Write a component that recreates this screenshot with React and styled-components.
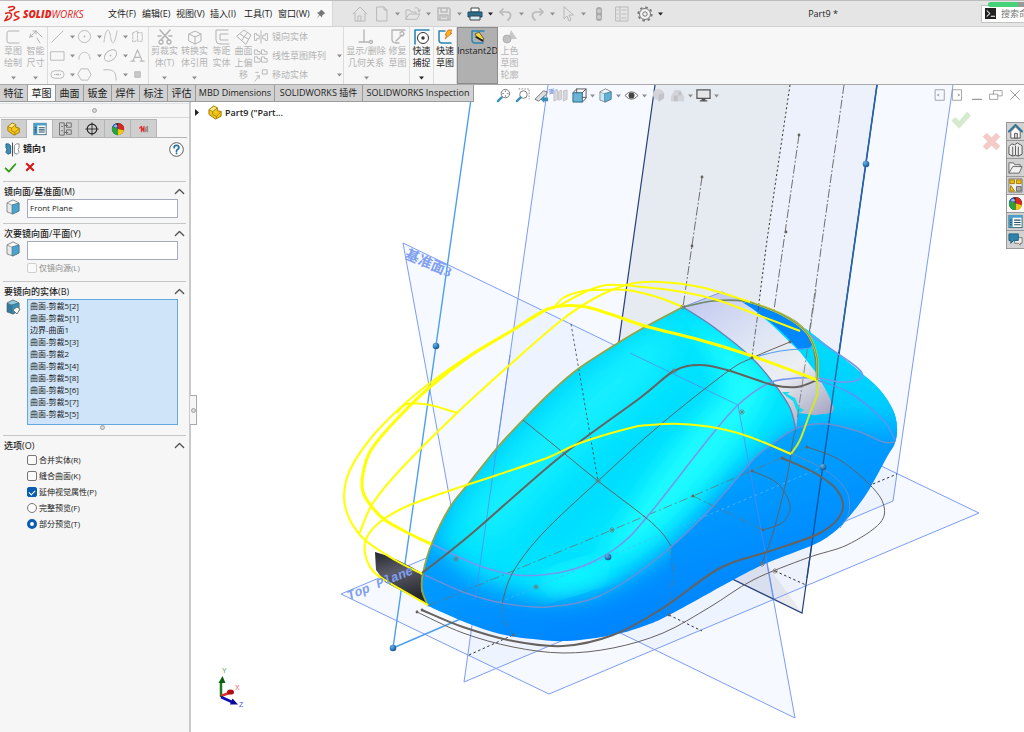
import React, { useState } from "react";
import styled, { createGlobalStyle, css } from "styled-components";

const GlobalStyle = createGlobalStyle`
  * {
    box-sizing: border-box;
  }
  body {
    margin: 0;
    background: #fff;
    color: #222;
    font-family: "Open Sans", "Noto Sans CJK SC", sans-serif;
    font-size: 9px;
    line-height: 12px;
  }
  button, input {
    font: inherit;
    color: inherit;
    margin: 0;
  }
  button {
    border: 0;
    padding: 0;
    background: none;
    cursor: pointer;
  }
`;

const Window = styled.div`
  display: flex;
  flex-direction: column;
  min-height: 100vh;
  overflow: hidden;
`;

/* ---------- title bar ---------- */

const TitleBar = styled.header`
  display: flex;
  align-items: stretch;
  height: 27px;
  background: #e5e5e5;
  border-top: 1px solid #bdbdbd;
  border-bottom: 1px solid #d2d2d2;
`;

const MenuSide = styled.div`
  display: flex;
  align-items: center;
  width: 333px;
  flex: none;
  padding-left: 4px;
  background: #f8f8f8;
  border-right: 1px solid #d8d8d8;
`;

const Logo = styled.div`
  display: flex;
  align-items: center;
  gap: 2px;
  width: 104px;
  color: #e2231a;
  font-size: 10px;
  font-style: italic;
  b {
    font-weight: 800;
  }
  svg {
    width: 17px;
    height: 17px;
    flex: none;
  }
`;

const Menu = styled.nav`
  display: flex;
  align-items: center;
  button {
    width: 34px;
    white-space: nowrap;
    text-align: left;
  }
  button:last-child {
    width: 38px;
  }
`;

const QuickTools = styled.div`
  display: flex;
  align-items: center;
  padding-left: 19px;
`;

const ToolButton = styled.button`
  display: flex;
  align-items: center;
  justify-content: ${(p) => (p.$center ? "center" : "flex-start")};
  gap: ${(p) => p.$gap || 5}px;
  width: ${(p) => p.$wide}px;
  flex: none;
  color: ${(p) => (p.$on ? "#333" : "#b9b9b9")};
`;

const DocTitle = styled.div`
  flex: 1;
  align-self: center;
  text-align: center;
  padding-right: 3px;
`;

const SearchWrap = styled.div`
  position: relative;
  display: flex;
`;

const SearchBox = styled.div`
  display: flex;
  align-items: center;
  align-self: center;
  gap: 5px;
  width: 43px;
  height: 18px;
  padding-left: 3px;
  overflow: hidden;
  background: #fff;
  border: 1px solid #c4c4c4;
  border-right: 0;
  input {
    width: 60px;
    border: 0;
    padding: 0;
    outline: none;
    background: none;
    font-size: 9px;
  }
  input::placeholder {
    color: #777;
    opacity: 1;
  }
`;

const Progress = styled.div`
  position: absolute;
  z-index: 1;
  top: 1px;
  right: 0;
  width: 36px;
  height: 5px;
  border-radius: 3px 0 0 3px;
  background: linear-gradient(90deg, #45d279 0 30px, #999 30px);
`;

/* ---------- ribbon ---------- */

const Ribbon = styled.div`
  display: flex;
  height: 58px;
  background: #f7f7f7;
  border-bottom: 1px solid #a8a8a8;
`;

const Group = styled.div`
  display: flex;
  padding: 0 1px;
  border-right: 1px solid ${(p) => (p.$last ? "transparent" : "#dcdcdc")};
`;

const BigTool = styled.button`
  display: flex;
  flex-direction: column;
  align-items: center;
  width: ${(p) => p.$wide}px;
  padding: 2px 0 4px;
  line-height: 12px;
  white-space: pre-line;
  color: ${(p) => (p.$on ? "#222" : "#b3b3b3")};
  ${(p) =>
    p.$pressed &&
    css`
      background: #b0b0b0;
      outline: 1px solid #8c8c8c;
      outline-offset: -1px;
    `}
  > svg:last-child {
    margin-top: auto;
  }
`;

const SketchGrid = styled.div`
  display: grid;
  grid-template-columns: 27px 26px 27px 17px;
  grid-auto-rows: 19px;
  padding: 0 0 0 1px;
  height: 57px;
`;

const SmallList = styled.div`
  display: grid;
  grid-auto-rows: 19px;
  width: 88px;
`;

const SmallTool = styled.button`
  display: flex;
  align-items: center;
  gap: 4px;
  color: #b3b3b3;
  white-space: nowrap;
  > svg:last-child {
    margin-left: auto;
  }
`;

/* ---------- workspace ---------- */

const Workspace = styled.main`
  position: relative;
  display: flex;
  flex-direction: column;
  flex: 1;
  min-height: 560px;
`;

const SceneSvg = styled.svg`
  position: absolute;
  inset: 0;
  width: 100%;
  height: 100%;
  pointer-events: none;
`;

const TopStrip = styled.div`
  position: relative;
  display: flex;
  align-items: flex-start;
  height: 17px;
`;

const TabBar = styled.div`
  display: flex;
  height: 17px;
  border-bottom: 1px solid #9b9b9b;
`;

const Tab = styled.button`
  width: ${(p) => p.$wide || 28}px;
  font-size: ${(p) => (p.$wide ? 9 : 10)}px;
  white-space: nowrap;
  background: ${(p) => (p.$active ? "#f9f9f9" : "#d1d1d1")};
  border-right: 1px solid #9b9b9b;
`;

const HeadsUp = styled.div`
  display: flex;
  align-items: center;
  padding: 3px 0 0 ${(p) => p.$left || 0}px;
  margin-left: ${(p) => (p.$end ? "auto" : 0)};
`;

const Columns = styled.div`
  position: relative;
  display: flex;
  flex: 1;
`;

/* ---------- property manager ---------- */

const Panel = styled.aside`
  position: relative;
  flex: none;
  width: 191px;
  background: #f6f6f6;
  border-right: 2px solid #c9c9c9;
`;

const Grip = styled.div`
  width: 5px;
  height: 5px;
  margin: ${(p) => p.$m || "auto"};
  border: 1px solid #a3a3a3;
  border-radius: 50%;
  background: #d8d8d8;
`;

const PanelTop = styled.div`
  display: flex;
  height: 15px;
  margin-top: 1px;
  border-top: 1px solid #dde3e6;
  border-bottom: 1px solid #d6d6d6;
`;

const PanelTabs = styled.div`
  display: flex;
  height: 19px;
  margin: 1px 2px 0 1px;
  border-bottom: 1px solid #b5b5b5;
`;

const PanelTab = styled.button`
  display: flex;
  align-items: center;
  justify-content: center;
  width: 26px;
  height: ${(p) => (p.$active ? 19 : 18)}px;
  background: ${(p) => (p.$active ? "#f6f6f6" : "#cfcfcf")};
  border-top: 1px solid #b5b5b5;
  border-right: 1px solid #b5b5b5;
`;

const FeatureHead = styled.div`
  display: flex;
  align-items: center;
  gap: 3px;
  height: 22px;
  padding: 0 5px;
  h1 {
    flex: 1;
    margin: 0;
    font-size: 9px;
    font-weight: 700;
  }
`;

const Actions = styled.div`
  display: flex;
  align-items: center;
  gap: 7px;
  height: 17px;
  padding-left: 4px;
`;

const Section = styled.section`
  margin: 4px 3px 0;
  border-top: 1px solid #c6c6c6;
  padding: 3px 0 1px;
`;

const SectionTitle = styled.button`
  display: flex;
  align-items: center;
  justify-content: space-between;
  width: 100%;
  height: 13px;
  padding: 0 1px;
  font-weight: 500;
`;

const PickRow = styled.div`
  display: flex;
  align-items: flex-start;
  gap: 6px;
  margin-top: 1px;
  padding: 0 8px 0 2px;
`;

const PickInput = styled.input`
  flex: 1;
  min-width: 0;
  height: 19px;
  padding: 0 2px 3px;
  border: 1px solid #a5abbd;
  background: #fff;
  font-size: 8px;
  outline: none;
`;

const BodyList = styled.ul`
  flex: 1;
  height: 126px;
  margin: 0;
  padding: 0 2px;
  list-style: none;
  overflow: hidden;
  border: 1px solid #62a9e0;
  background: #cfe4f8;
  font-size: 8px;
  line-height: 12px;
`;

const Choice = styled.label`
  display: flex;
  align-items: center;
  gap: 2px;
  height: 16px;
  padding-left: 24px;
  font-size: 8px;
  color: ${(p) => (p.$off ? "#8b8b8b" : "#222")};
  input {
    appearance: none;
    display: flex;
    align-items: center;
    justify-content: center;
    width: 10px;
    height: 10px;
    border: 1px solid ${(p) => (p.$off ? "#cfcfcf" : "#777")};
    border-radius: 2px;
    background: #fafafa;
  }
  input[type="radio"] {
    border-radius: 50%;
  }
  input[type="checkbox"]:checked {
    border-color: #0a5cb0;
    background: #0a5cb0;
  }
  input[type="checkbox"]:checked::after {
    content: "";
    width: 5px;
    height: 3px;
    border: solid #fff;
    border-width: 0 0 1px 1px;
    transform: rotate(-45deg);
  }
  input[type="radio"]:checked {
    border: 3px solid #0a5cb0;
    background: #fff;
  }
`;

const PanelHandle = styled.button`
  position: absolute;
  top: 293px;
  right: -8px;
  display: flex;
  width: 7px;
  height: 30px;
  background: #f6f6f6;
  border: 1px solid #a9a9a9;
  border-left: 0;
`;

/* ---------- graphics area ---------- */

const TreeRoot = styled.button`
  display: flex;
  align-items: center;
  align-self: flex-start;
  gap: 2px;
  padding: 3px 0 0 4px;
  font-size: 9px;
  font-weight: 600;
  > svg:first-child {
    margin-right: 6px;
  }
`;

const Corner = styled.div`
  display: flex;
  align-items: flex-start;
  gap: 11px;
  margin-left: auto;
  padding: 7px 5px 0 0;
  button + button {
    margin-top: 23px;
  }
`;

const TaskPane = styled.div`
  display: flex;
  flex-direction: column;
  align-self: flex-start;
  width: 18px;
  margin-top: 20px;
  border-left: 1px solid #999;
  border-top: 1px solid #999;
`;

const TaskButton = styled.button`
  display: flex;
  align-items: center;
  justify-content: center;
  height: 18px;
  background: ${(p) => (p.$active ? "#f8f8f8" : "#d2d2d2")};
  border-bottom: 1px solid #999;
`;

/* ---------- icons ---------- */

const P = ({ d, ...rest }) => (
  <path d={d} fill="none" stroke="currentColor" strokeLinecap="round" strokeLinejoin="round" {...rest} />
);

const cubeFaces = (front, side, top) => (
  <>
    <path d="M2 4 8 1l6 3v8l-6 3-6-2z" fill={side} stroke="#555" strokeWidth=".6" />
    <path d="M2 4l5 2 7-2-6-3z" fill={top} stroke="#666" strokeWidth=".5" />
    <path d="M7 6l7-2v8l-7 3z" fill={front} stroke="#35708d" strokeWidth=".6" />
  </>
);

const ballArt = (
  <>
    <circle cx="8" cy="8" r="7" fill="#222" />
    <path d="M8 8 6 1.300A7 7 0 0 0 2 11.500z" fill="#2d61c9" />
    <path d="M8 8 2 5A7 7 0 0 0 4 13.700z" fill="#2da23a" />
    <path d="M8 8 8 1A7 7 0 0 1 14.800 9.500z" fill="#d8281f" />
    <path d="M8 8l6.800 1.500A7 7 0 0 1 8 15z" fill="#f3c613" />
    <path d="M8 8v7A7 7 0 0 1 3 13z" fill="#2da23a" />
    <ellipse cx="5.500" cy="4.500" rx="2" ry="1.400" fill="#fff" opacity=".55" />
  </>
);

const art = {
  home: <P d="M1 8 8 1l7 7M3 7v8h10V7M6 15v-5h3v5" />,
  doc: <P d="M3 1h7l3 3v11H3zM10 1v3h3" />,
  open: <P d="M1 13V4h4l1 2h5v2M1 13l3-5h11l-3 5zM10 2c3-1 5 1 4 4l-1-2m1 2 1-2" />,
  save: <P d="M2 2h11l1 1v11H2zM5 2v4h6V2M4 14V9h8v5M6 11h4" strokeWidth="1.500" />,
  print: (
    <>
      <path d="M4 2h8v4H4z" fill="#fff" stroke="#444" />
      <path d="M1 6h14v5H1z" fill="#2b6c8c" stroke="#1d4c64" />
      <path d="M3 10h10v4H3z" fill="#d6eef9" stroke="#444" />
    </>
  ),
  undo: <P d="M5 3 2 6l3 3M2 6h7c4 0 5 5 1 8" strokeWidth="1.700" />,
  redo: <P d="m11 3 3 3-3 3m3-3H7c-4 0-5 5-1 8" strokeWidth="1.700" />,
  cursor: <P d="M4 1v12l3-3 2 5 2-1-2-5h4z" />,
  traffic: (
    <>
      <rect x="5" y="1" width="6" height="14" rx="3" fill="#aaa" />
      <circle cx="8" cy="5" r="2" fill="#ccc" />
      <circle cx="8" cy="11" r="2" fill="#ccc" />
    </>
  ),
  list: <P d="M2 1h12v14H2zM6 1v14M8 4h4M8 8h4M8 12h4M3 4h1M3 8h1M3 12h1" />,
  gear: (
    <>
      <circle cx="8" cy="8" r="5.500" fill="#f2f2f2" stroke="#777" />
      <circle cx="8" cy="8" r="6.800" fill="none" stroke="#777" strokeWidth="1.600" strokeDasharray="2.600 2.740" />
      <circle cx="8" cy="8" r="2.200" fill="none" stroke="#777" />
    </>
  ),
  pin: <path d="M9 1l6 6-2 .5-3 3-.5 3L6 10l-5 5 4-6-3.500-3.500 3-.5 3-3z" fill="#777" />,
  prompt: (
    <>
      <rect width="16" height="16" fill="#222" />
      <P d="m3 4 4 4-4 4M9 12h5" stroke="#fff" strokeWidth="1.500" />
    </>
  ),
  sketch: <P d="M14 2H4Q2 2 2 4v8q0 2 2 2h10" />,
  dim: <P d="M2 8l6-6 6 6M2 8l3-.5M2 8l.5-3M8 2h-3m3 0v3M9 9l3 5" />,
  line: <P d="M2 14 14 2" />,
  circle: (
    <>
      <circle cx="8" cy="8" r="6.500" fill="none" stroke="currentColor" />
      <circle cx="8" cy="8" r="1" fill="currentColor" />
    </>
  ),
  spline: <P d="M1 14C3-4 7 0 8 8s4 12 7-6" />,
  box3: <P d="M3 4l5-2v10l-5 2zM8 4h5v9H8" strokeDasharray="2 1.500" />,
  rect: <P d="M1 4h14v9H1z" />,
  arc: <P d="M2 12C2 2 14 2 14 12" />,
  ellipse: (
    <>
      <ellipse cx="8" cy="8" rx="7.500" ry="5" transform="rotate(-40 8 8)" fill="none" stroke="currentColor" />
      <circle cx="8" cy="8" r="1" fill="currentColor" />
    </>
  ),
  letter: <P d="M3 14 8 2l5 12M5 10h6M1 14h4m6 0h4" strokeWidth="1.300" />,
  slot: (
    <>
      <rect x="1" y="4" width="14" height="8" rx="4" fill="none" stroke="currentColor" />
      <P d="M5 8h.1M11 8h.1M7 8h2" strokeWidth="1.500" />
    </>
  ),
  hex: <P d="M4.500 2h7L15 8l-3.500 6h-7L1 8z" />,
  fillet: <P d="M1 3h5c6 0 8 4 8 11" />,
  dot: <path d="M5 5h6v6H5z" fill="#c8c8c8" stroke="#bbb" />,
  trim: (
    <>
      <P d="M3 1l9 10M13 1 4 11" strokeWidth="1.600" />
      <P d="M2 13a2 2 0 1 0 4 0 2 2 0 1 0-4 0M10 13a2 2 0 1 0 4 0 2 2 0 1 0-4 0M1 7h3m8 0h3" strokeWidth="1.300" />
    </>
  ),
  cube: <P d="M2 5l6-3 6 3v7l-6 3-6-3zM2 5l6 3 6-3M8 8v7" />,
  offset: <P d="M14 1H2v10q0 4 4 4h9M14 5H6v6h8" />,
  surf: <P d="M1 7l7-6 7 5-5 9zM4 5l8 5M6 11l5-7" />,
  mirror: <P d="M8 1v14M1 4h2v2h3v4H3v2H1zM15 4h-2v2h-3v4h3v2h2z" />,
  pattern: <P d="M1 1h3v2h3v3H1zM1 9h3v2h3v4H1zM9 1h3v2h3v3H9zM9 9h3v2h3v4H9z" />,
  move: <P d="M1 15 6 9m0 0H3m3 0v3M10 2h5v5h-5zM2 5h3" />,
  relation: <P d="M6 1v12M1 13h10M13 11.500a1.500 1.500 0 1 1 0 3 1.500 1.500 0 1 1 0-3" strokeWidth="1.300" />,
  repair: <P d="M15 1H2v9q0 4 4 4h3M6 12l6-6m-2-2q3-3 4 1-1 3-4 1" strokeWidth="1.300" />,
  snap: (
    <>
      <P d="M1 15V1h14" stroke="#2b87b5" strokeWidth="1.600" />
      <circle cx="9" cy="9" r="5.500" fill="#fff" stroke="#333" />
      <circle cx="9" cy="9" r="1.700" fill="#333" />
    </>
  ),
  rapid: (
    <>
      <P d="M8 2H2v9q0 3 3 3h9" stroke="#2b87b5" strokeWidth="1.500" />
      <path d="M11 1h4l-2 3h2L8 10l2-4H8z" fill="#ffb31a" stroke="#cc6412" strokeWidth=".7" />
    </>
  ),
  instant: (
    <>
      <P d="M14 2H2v9q0 3 3 3h8" stroke="#2b87b5" strokeWidth="1.500" />
      <path d="M5 5l4-2 5 7-2 1-6-4z" fill="#f1d93a" stroke="#444" strokeWidth=".8" />
      <P d="M6 8l7 4" stroke="#222" strokeWidth="1.500" />
    </>
  ),
  shaded: (
    <>
      <path d="M9 1l6 9H6z" fill="#c8c8c8" />
      <circle cx="5" cy="10" r="4" fill="#c0c0c0" stroke="#b1b1b1" />
    </>
  ),
  part: (
    <>
      <path d="M1 5l5-4 4 2v3l4 1v5l-6 3-7-5z" fill="#f5c71d" stroke="#9a7400" />
      <path d="M1 5l4 2 5-4M5 7v3l4 2 5-5M9 12v3" fill="none" stroke="#a98303" />
      <path d="M2 5l4-3 3 1-4 3z" fill="#fff0a0" />
    </>
  ),
  props: (
    <>
      <rect x="1" y="1.500" width="14" height="13" fill="#fff" stroke="#35657c" />
      <path d="M1 1h14v3H1zM1 4h4v10H1z" fill="#4c9fc7" />
      <P d="M7 6.500h6M7 9h6M7 11.500h6M2.500 6.500h1M2.500 9h1M2.500 11.500h1" stroke="#234c63" strokeWidth="1.200" />
    </>
  ),
  config: <P d="M1 1h5v14H1zM6 4h4M9 1h5v5H9zM6 12h4M9 9h5v5H9zM3 5h1M3 10h1" stroke="#666" />,
  target: (
    <>
      <circle cx="8" cy="8" r="5.500" fill="none" stroke="#222" strokeWidth="1.300" />
      <P d="M8 1v14M1 8h14" stroke="#222" />
    </>
  ),
  ball: ballArt,
  cam: (
    <>
      <P d="M3 7l2-2v6M5 5l2 5 1-5v6" stroke="#e32b2b" strokeWidth="1.300" />
      <P d="M10 11V7l2-2v6M10 9h2" stroke="#888" strokeWidth="1.300" />
    </>
  ),
  mirrorColor: (
    <>
      <path d="M1 2h3l2 2v8l-3 1-2-2 1-3-1-2z" fill="#3a8fb7" stroke="#245f7e" />
      <path d="M15 2h-3l-2 2v8l3 1 2-2-1-3 1-2z" fill="#fff" stroke="#888" />
      <P d="M8 1v14" stroke="#444" />
    </>
  ),
  help: (
    <>
      <circle cx="8" cy="8" r="7.300" fill="#fff" stroke="#555" />
      <P d="M5.500 6q0-2.500 2.500-2.500T10.500 6q0 1.300-1.500 2-1 .5-1 1.800M8 12v.2" stroke="#24749f" strokeWidth="1.900" />
    </>
  ),
  ok: <P d="M2 9l4 4 8-9" stroke="#2f9e17" strokeWidth="2.200" />,
  cancel: <P d="M3 3l10 10M13 3 3 13" stroke="#d31a12" strokeWidth="2.800" strokeLinecap="butt" />,
  okPale: <path d="M1 9l3-3 3 3 6-7 3 3-9 10z" fill="#d6ead0" />,
  cancelPale: <path d="M4 1l4 4 4-4 3 3-4 4 4 4-3 3-4-4-4 4-3-3 4-4-4-4z" fill="#f5cbc8" stroke="#eab9b5" strokeWidth=".5" />,
  chevron: <P d="M2 11l6-6 6 6" stroke="#555" strokeWidth="2" />,
  face: cubeFaces("#4ba3cb", "#e8e8e8", "#fafafa"),
  bodies: (
    <>
      {cubeFaces("#3b8fb5", "#2f7c9f", "#8fcbe3")}
      <path d="M8 11l4-3 3 2-3 5z" fill="#fff" stroke="#777" />
    </>
  ),
  zoomFit: (
    <>
      <circle cx="10" cy="6" r="4.500" fill="#fff" stroke="#777" />
      <path d="M10 2.500v7M6.500 6h7" stroke="#888" strokeDasharray="2 3" />
      <P d="M6 10l-4 4" stroke="#3b8fb5" strokeWidth="2.500" />
    </>
  ),
  zoomArea: (
    <>
      <path d="M4 1h11v11" fill="none" stroke="#777" strokeDasharray="1.500 1.500" />
      <circle cx="9" cy="7" r="4" fill="#fff" stroke="#777" />
      <P d="M6 10l-4 4" stroke="#3b8fb5" strokeWidth="2.500" />
    </>
  ),
  prevView: (
    <>
      <path d="M1 12l9-9 4 1-1 3-8 7z" fill="#ddd" stroke="#777" />
      <path d="M7 12l4-4v2h4v4h-4v2z" fill="#3b8fb5" />
    </>
  ),
  section: <path d="M1 4l4-2v10l-4 2zM6 4l3-2v10l-3 1zM11 3l4-1v10l-4 2z" fill="#d8d8dc" stroke="#c3c3c8" />,
  orient: (
    <>
      <path d="M1 5h10v10H1z" fill="#6ab4d6" stroke="#2a6685" />
      <P d="M1 5l4-4h10v10l-4 4M11 5l4-4M5 1v4m6 5h4" stroke="#555" />
    </>
  ),
  display: cubeFaces("#5fb2d6", "#cbe7f3", "#eef8fc"),
  eye: (
    <>
      <path d="M1 8q7-8 14 0-7 8-14 0z" fill="#fff" stroke="#666" />
      <circle cx="8" cy="8" r="3.200" fill="#444" />
    </>
  ),
  appearance: (
    <>
      <circle cx="8" cy="7" r="6" fill="#d3d4d9" />
      <path d="M8 7l6-2v6l-6 4z" fill="#c2c4ca" />
    </>
  ),
  scene: (
    <>
      <path d="M1 9l4-7h6l4 7v5H1z" fill="#d3d4d9" />
      <path d="M4 8h4v6H4zM9 4h3v4H9z" fill="#c0c2c8" />
    </>
  ),
  monitor: (
    <>
      <path d="M1 2h14v9H1z" fill="#e4e6ea" stroke="#555" strokeWidth="1.300" />
      <path d="M6 11h4v3H6zM4 13h8v1.500H4z" fill="#555" />
    </>
  ),
  dockL: <P d="M4 2h10v12H4zM8 7 6 8l2 1" stroke="#999" />,
  dockR: <P d="M2 2h10v12H2zM8 7l2 1-2 1" stroke="#999" />,
  minimize: <P d="M3 13h10" stroke="#999" strokeWidth="1.500" />,
  restore: <P d="M1 7h9v6H1zM5 7V3h10v6h-5" stroke="#999" />,
  close: <P d="M3 3l10 10M13 3 3 13" stroke="#888" />,
  paneHome: (
    <>
      <path d="M3 8v7h10V8L8 3z" fill="#fff" stroke="#555" />
      <P d="M1 8l7-7 7 7" stroke="#2e7296" strokeWidth="2" />
      <path d="M7 10h3v5H7z" fill="#ddd" stroke="#555" />
    </>
  ),
  library: <path d="M1 5l3-3 3 1 3-2 5 3v9l-4 2-3-1-3 1-4-2zM5 5v10M8 4v10M11 5v10" fill="#eee" stroke="#555" />,
  folder: <path d="M1 14V3h5l1 2h6v2h2l-3 7zM1 14l4-7h9" fill="#f1f1f1" stroke="#666" />,
  palette: (
    <>
      <path d="M1 1h14v14H1z" fill="#f2f2f2" stroke="#777" />
      <path d="M2 2h5v4H2zM9 2h5v4H9zM3 8l4 6H2z" fill="#eebb1c" stroke="#a57d00" />
      <path d="M9 9h5v5H9z" fill="#aaa" stroke="#666" />
    </>
  ),
  chat: (
    <>
      <path d="M7 6h8v6h-2v2l-2-2H7z" fill="#eee" stroke="#777" />
      <path d="M1 2h10v7H6l-3 3V9H1z" fill="#2f82ac" stroke="#225f7e" />
    </>
  ),
};

function Icon({ name, size = 16 }) {
  return (
    <svg width={size} height={size} viewBox="0 0 16 16" aria-hidden="true" style={{ flex: "none" }}>
      {art[name]}
    </svg>
  );
}

function Caret({ dark }) {
  return (
    <svg width="5" height="4" viewBox="0 0 5 4" aria-hidden="true" style={{ flex: "none" }}>
      <path d="M0 .5h5L2.500 3.500z" fill={dark ? "#222" : "#8f8f8f"} />
    </svg>
  );
}

/* ---------- 3D scene ---------- */

// smooth line through a list of "x,y" points
function smooth(text) {
  const p = text.trim().split(/\s+/).map((s) => s.split(",").map(Number));
  let d = `M${p[0]}`;
  for (let i = 0; i < p.length - 1; i++) {
    const a = p[i - 1] || p[i];
    const b = p[i];
    const c = p[i + 1];
    const e = p[i + 2] || c;
    d += `C${b[0] + (c[0] - a[0]) / 6} ${b[1] + (c[1] - a[1]) / 6} ${c[0] - (e[0] - b[0]) / 6} ${
      c[1] - (e[1] - b[1]) / 6
    } ${c}`;
  }
  return d;
}

const Curve = ({ pts, c = "#66625e", w = 1, ...rest }) => (
  <path d={smooth(pts)} fill="none" stroke={c} strokeWidth={w} {...rest} />
);

const Straight = ({ pts, c = "#7b9cf5", w = 1, ...rest }) => (
  <polyline points={pts} fill="none" stroke={c} strokeWidth={w} {...rest} />
);

const LEFT_EDGE =
  "428,606 422,590 423,573 432,543 450,507 469,483 497,448 523,420 550,393 578,369 618,343 645,327 683,307";
const OUTLINE =
  LEFT_EDGE +
  " 713,301 743,301 773,310 800,325 833,350 860,372 880,390 893,410 897,427 895,443 887,457 867,493 848,518 833,533 813,545 767,563 733,580 673,613 647,625 613,635 567,641 533,639 500,634 467,623 428,606";
const FENDER =
  "425,575 463,592 502,603 547,607 597,597 650,564 703,517 753,460 767,448 797,428 827,424 860,432 883,442 895,442";
const FRONT_EDGE = "683,307 715,328 752,358 775,385 790,408 796,430";

const yellow = [
  ["817,380 752,356 700,340 645,326 610,314 580,306 548,309 513,330 470,356 430,387 396,420 371,450 363,474 363,492 372,507 385,520 410,534 431,544", 3],
  ["548,309 513,330 470,355 430,383 400,408 371,438 350,470 344,497 350,520 365,540 395,560 422,574", 2],
  ["683,307 657,297 627,290 600,290 583,291 563,298 553,309", 2],
  ["800,331 750,312 717,300 683,292 643,287 607,285 583,293 557,307", 2],
  ["817,380 817,357 807,333 783,315 750,302 700,287 660,282 630,284 597,297 563,319 513,362 457,413 400,470 373,503 362,527 360,533", 2],
  ["457,413 430,405 407,404 397,413", 2],
  ["791,454 750,437 717,428 680,424 650,425 630,428 580,443 547,458 497,475 437,495 403,508 380,522 367,537 365,553 373,571 390,583 428,605", 2],
];

const sketchCurves = [
  ["422,573 470,535 560,457 640,398 674,371 700,365 727,370 773,385 797,387 817,380", 2],
  ["523,420 560,450 598,481 645,517 662,533 671,546", 1],
  ["790,342 752,358 727,372 660,425 598,481 543,533 513,572 502,603", 1],
  ["422,610 463,627 513,641 563,646 613,635 663,608 720,568 767,552 820,533 842,512 837,490 813,472 782,458", 2],
  ["417,612 463,633 513,647 563,653 613,648 663,633 710,607 753,580 807,558 847,545 880,523 883,503 867,482 838,459 807,447", 1],
  ["752,471 777,483 790,505 783,522 763,530", 1],
  ["796,430 793,440 787,477 773,533 762,563", 1],
];

const marks = [
  [674, 371], [742, 412], [598, 481], [612, 530], [536, 587], [456, 559], [683, 307], [762, 564], [775, 571],
];
const pointDots = [
  [702, 177], [692, 246], [799, 135], [786, 232], [422, 610], [417, 612], [807, 447], [782, 458], [752, 471],
  [763, 530], [693, 496], [513, 635], [669, 615], [752, 358], [790, 342],
];
const handles = [[436, 346], [393, 648], [866, 164], [823, 467], [608, 557]];

function Scene() {
  return (
    <SceneSvg viewBox="0 85 1024 647" preserveAspectRatio="xMidYMid slice">
      <defs>
        <clipPath id="bodyClip">
          <path d={smooth(OUTLINE) + "z"} />
        </clipPath>
        <clipPath id="topClip">
          <path d={smooth(LEFT_EDGE) + smooth(FRONT_EDGE).replace("M", "L") + "L797 428 780 438 753 460 703 517 672 546 660 640 430 640z"} />
        </clipPath>
        <linearGradient id="side" gradientUnits="userSpaceOnUse" x1="560" y1="380" x2="640" y2="640">
          <stop offset="0" stopColor="#00c4ff" />
          <stop offset=".45" stopColor="#00a2ff" />
          <stop offset="1" stopColor="#0082ff" />
        </linearGradient>
        <linearGradient id="rear" x1="0" y1="0" x2="0" y2="1">
          <stop offset=".3" stopColor="#00dcfc" />
          <stop offset=".75" stopColor="#00ccff" />
          <stop offset="1" stopColor="#00a0ff" />
        </linearGradient>
        <linearGradient id="hollow" x1="0" y1="0" x2=".8" y2="1">
          <stop offset="0" stopColor="#bfc5f0" />
          <stop offset=".45" stopColor="#dfe6f4" />
          <stop offset=".7" stopColor="#eceef2" />
          <stop offset="1" stopColor="#a9a9c4" />
        </linearGradient>
        <linearGradient id="dark" x1="0" y1="0" x2=".3" y2="1">
          <stop offset="0" stopColor="#24262e" />
          <stop offset=".45" stopColor="#5b5c68" />
          <stop offset="1" stopColor="#25262c" />
        </linearGradient>
        <radialGradient id="ball" cx=".35" cy=".3" r=".8">
          <stop offset="0" stopColor="#6cb4e6" />
          <stop offset=".6" stopColor="#2874b5" />
          <stop offset="1" stopColor="#174b82" />
        </radialGradient>
        <filter id="soft" x="-30%" y="-30%" width="160%" height="160%">
          <feGaussianBlur stdDeviation="11" />
        </filter>
        <filter id="softer" x="-50%" y="-50%" width="200%" height="200%">
          <feGaussianBlur stdDeviation="16" />
        </filter>
      </defs>

      {/* reference planes */}
      <g fill="#5f8cff" fillOpacity=".055">
        <path d="M548 85H953L893 501 464 682z" />
        <path d="M403 243 738 405 795 718 460 555z" />
        <path d="M341 594 549 694 979 513 771 413z" />
      </g>
      <path d="M655 85H877L802 613 595 512z" fill="#5a70d0" fillOpacity=".06" />
      <path d="M655 85H790L752 357 618 400V339z" fill="#d2d0c8" fillOpacity=".2" />
      <path d="M732 579 765 562 802 613z" fill="#888" fillOpacity=".12" />
      <Straight pts="403,243 738,405 795,718 460,555 403,243" />
      <Straight pts="341,594 549,694 979,513 771,413 341,594" />
      <Straight pts="548,85 464,682 893,501 953,85" />
      <Straight pts="655,85 595,512 802,613 877,85" c="#27407c" w="1.2" />
      <Straight pts="473,85 393,648 500,602" c="#4c9ff3" w="1.4" />
      <Straight pts="877,85 823,467" c="#2462ad" w="1.6" />
      <g fill="#7f9ff0" fontFamily='"Liberation Serif", "Noto Sans CJK SC", serif' fontWeight="700">
        <text x="404" y="258" fontSize="14" transform="rotate(23 404 258)">基准面3</text>
        <text x="549" y="94" fontSize="6" transform="rotate(-8 549 94)">面1</text>
      </g>

      {/* construction lines above the body */}
      <g fill="none" stroke="#6f6f72">
        <path d="M790 85 767 240 752 357" strokeDasharray="2 2.500" stroke="#333" />
        <path d="M702 177 683 307M799 135 774 310M844 85 797 420" strokeDasharray="9 2 2 2" />
        <path d="M469 655 513 635M669 615 702 631M775 571 806 585M873 484 897 474" strokeDasharray="2.500 2.500" stroke="#333" />
      </g>

      {/* solid body */}
      <path d="M375 552Q395 557 422 573L421 590 428 605 385 582 376 570z" fill="url(#dark)" />
      <g clipPath="url(#bodyClip)">
        <path d="M400 280H910V660H400z" fill="url(#side)" />
        <path d="M745 295H900V442L883 442 860 432 827 424 797 428 780 400z" fill="url(#rear)" />
        <g clipPath="url(#topClip)">
          <path
            d={smooth("434,540 460,485 515,418 572,364 640,323 690,300 760,350 810,405 774,442 724,485 670,545 604,588 545,597 480,580 434,540")}
            fill="#00e2ff"
            filter="url(#soft)"
          />
          <path d={smooth("690,318 740,350 770,385 740,440 690,500 640,545 600,560 650,480 695,420 720,380 690,318")} fill="#1dfbff" filter="url(#soft)" />
          <path d={smooth("565,400 620,350 680,330 650,380 590,440 530,500 490,540 470,510 565,400")} fill="#22f6ff" opacity=".7" filter="url(#softer)" />
          <path d={smooth("715,385 670,415 610,480 560,530 545,550")} fill="none" stroke="#00d6ff" strokeWidth="18" opacity=".5" filter="url(#soft)" />
          <ellipse cx="575" cy="577" rx="40" ry="11" fill="#16fbff" transform="rotate(-17 575 577)" filter="url(#soft)" />
          <path d={smooth("430,545 455,500 497,448 550,393 618,343")} fill="none" stroke="#00b9ff" strokeWidth="8" opacity=".5" filter="url(#soft)" />
        </g>
        {/* open window at the back of the shell */}
        <path
          d={smooth(FRONT_EDGE) + "L798 413 815 415 832 413 834 408 828 394 817 374 800 352 772 325 745 302 722 292 683 307z"}
          fill="url(#hollow)"
        />
        <path d="M742 302Q775 306 800 326 814 338 812 345 810 350 798 349 775 322 742 302z" fill="#0087fb" />
        <path d="M782 392h8l-3 2 8 4 4 9 5 3-6 4-5-13-7-5z" fill="#16dbed" />
      </g>
      <path d="M683 307 722 292 745 302 713 301z" fill="#c4caf0" />
      <Straight pts="683,307 722,292 745,302" c="#7f9be0" />

      {/* planes and edges seen through the body */}
      <g opacity=".75">
        <Straight pts="630,353 738,405 774,600" c="#5a86f2" />
        <Straight pts="510,355 475,600" c="#5a86f2" />
        <Straight pts="839,352 807,578" c="#17407e" w="1.4" />
        <Straight pts="500,602 608,557 823,467" c="#56b4f7" strokeDasharray="3 3" />
        <Straight pts="428,606 612,530 693,496 807,447" c="#72726c" strokeDasharray="9 3 2 3" />
        <Straight pts="693,496 763,530" c="#72726c" strokeDasharray="9 3 2 3" />
        <Straight pts="671,546 673,575 669,615" c="#72726c" strokeDasharray="9 3 2 3" />
        <Straight pts="502,603 503,620 513,635" c="#72726c" strokeDasharray="9 3 2 3" />
        <Straight pts="571,324 598,481" c="#333" strokeDasharray="2.500 2.500" />
        <Straight pts="816,290 797,420" c="#72726c" strokeDasharray="9 2 2 2" />
        <Straight pts="759,305 752,357" c="#444" strokeDasharray="6 2 2 2" />
      </g>
      <Curve pts={FENDER} c="#6d8fd4" w={1.4} />
      <Curve pts={FRONT_EDGE} c="#6b7fae" w={1.3} />
      <Curve pts="432,544 477,565 517,575 557,573 590,563 620,545 647,517 710,437 738,405 767,384 787,379 817,378 840,382 858,380 862,373 850,362 810,335" c="#7598ee" w={1.6} />
      <Curve pts="817,380 850,393 883,420 895,440" c="#5a95f5" w={1.5} />
      <Curve pts="752,358 780,351 812,348" c="#4f9ff2" w={1.2} />
      <Curve pts="791,453 825,470 846,490 849,512 840,528" c="#5b93c8" w={1} />
      <Curve pts={LEFT_EDGE} c="#95a542" w={1.8} />
      <Curve pts="683,307 713,301 743,301 773,310 800,325 813,345 817,380" c="#6e8a66" w={1.6} />
      {sketchCurves.map(([pts, w]) => (
        <Curve key={pts} pts={pts} w={w} />
      ))}

      {/* mirror preview */}
      {yellow.map(([pts, w]) => (
        <Curve key={pts} pts={pts} w={w} c="#ffff00" />
      ))}
      <Curve pts="817,380 817,395 810,413 800,440 791,454" c="#d3e62e" w={2} />
      <Curve pts="750,302 783,315 807,333 817,357 817,380" c="#8f9d50" w={1.5} />

      <text
        x="349"
        y="600"
        fontSize="13"
        fontStyle="italic"
        fontWeight="700"
        fontFamily='"Liberation Mono", monospace'
        fill="#7f9ff0"
        transform="rotate(-22 349 600)"
      >
        Top Plane
      </text>

      {marks.map(([x, y]) => (
        <path key={x} d={`M${x - 3} ${y}h6M${x} ${y - 3}v6M${x - 2} ${y - 2}l4 4m0-4-4 4`} stroke="#77736e" strokeWidth=".7" />
      ))}
      {pointDots.map(([x, y]) => (
        <circle key={`${x}-${y}`} cx={x} cy={y} r="1.400" fill="#66625e" />
      ))}
      {handles.map(([x, y]) => (
        <circle key={x} cx={x} cy={y} r="3.300" fill="url(#ball)" />
      ))}

      {/* view triad */}
      <g strokeWidth="2.500" fontFamily='"Liberation Sans", sans-serif' fontSize="7">
        <path d="M221 697V682" stroke="#187a1c" />
        <path d="M218.500 683 222.500 676 225.500 683z" fill="#0d5f12" />
        <path d="M221 696 229 693" stroke="#e03030" />
        <ellipse cx="230.500" cy="692" rx="3.500" ry="2.600" fill="#b40d0d" />
        <path d="M221 697 232 702" stroke="#0a0ab4" />
        <path d="M230 704.500 232.500 698.500 238 704.500z" fill="#0a0a9a" />
        <text x="222" y="673" fill="#4aa54a">Y</text>
        <text x="235" y="690" fill="#f06060">X</text>
        <text x="239" y="707" fill="#5050f0">Z</text>
      </g>
    </SceneSvg>
  );
}

/* ---------- data ---------- */

const menus = ["文件(F)", "编辑(E)", "视图(V)", "插入(I)", "工具(T)", "窗口(W)"];

// icon, width, drop-down, enabled
const quickTools = [
  ["home", 22], ["doc", 31, 1], ["open", 31, 1], ["save", 31, 1], ["print", 31, 1, 1], ["undo", 31, 1],
  ["redo", 31, 1], ["cursor", 31, 1], ["traffic", 23], ["list", 23], ["gear", 31, 1, 1],
];

const sketchTools = [
  "line", "circle", "spline", "box3", "rect", "arc", "ellipse", "letter", "slot", "hex", "fillet", "dot",
];
const withoutCaret = ["box3", "letter", "hex", "dot"];

const tabs = [
  ["特征"], ["草图"], ["曲面"], ["钣金"], ["焊件"], ["标注"], ["评估"],
  ["MBD Dimensions", 79], ["SOLIDWORKS 插件", 88], ["SOLIDWORKS Inspection", 111],
];

const viewTools = [
  ["zoomFit", 19], ["zoomArea", 19], ["prevView", 19], ["section", 19], ["orient", 26, 1], ["display", 26, 1],
  ["eye", 27, 1], ["appearance", 19], ["scene", 26, 1], ["monitor", 24, 1],
];

const bodies = [
  "曲面-剪裁5[2]", "曲面-剪裁5[1]", "边界-曲面1", "曲面-剪裁5[3]", "曲面-剪裁2",
  "曲面-剪裁5[4]", "曲面-剪裁5[8]", "曲面-剪裁5[6]", "曲面-剪裁5[7]", "曲面-剪裁5[5]",
];

const Big = ({ icon, label, wide, caret, on, pressed }) => (
  <BigTool $wide={wide} $on={on} $pressed={pressed}>
    <Icon name={icon} />
    <span>{label}</span>
    {caret && <Caret dark={on} />}
  </BigTool>
);

const Head = ({ children }) => (
  <SectionTitle>
    {children}
    <Icon name="chevron" size={11} />
  </SectionTitle>
);

function PropertyManager() {
  const [merge, setMerge] = useState(false);
  const [knit, setKnit] = useState(false);
  const [visual, setVisual] = useState(true);
  const [preview, setPreview] = useState("part");

  return (
    <Panel>
      <PanelTop>
        <Grip />
      </PanelTop>
      <PanelTabs>
        {["part", "props", "config", "target", "ball", "cam"].map((name) => (
          <PanelTab key={name} $active={name === "props"} aria-label={name}>
            <Icon name={name} size={14} />
          </PanelTab>
        ))}
      </PanelTabs>
      <FeatureHead>
        <Icon name="mirrorColor" size={15} />
        <h1>镜向1</h1>
        <Icon name="help" size={15} />
      </FeatureHead>
      <Actions>
        <button aria-label="确定"><Icon name="ok" size={13} /></button>
        <button aria-label="取消"><Icon name="cancel" size={12} /></button>
      </Actions>

      <Section>
        <Head>镜向面/基准面(M)</Head>
        <PickRow>
          <Icon name="face" />
          <PickInput defaultValue="Front Plane" aria-label="镜向面/基准面" />
        </PickRow>
      </Section>
      <Section>
        <Head>次要镜向面/平面(Y)</Head>
        <PickRow>
          <Icon name="face" />
          <PickInput aria-label="次要镜向面/平面" />
        </PickRow>
        <Choice $off>
          <input type="checkbox" disabled />
          仅镜向源(L)
        </Choice>
      </Section>
      <Section>
        <Head>要镜向的实体(B)</Head>
        <PickRow>
          <Icon name="bodies" />
          <BodyList>
            {bodies.map((name) => (
              <li key={name}>{name}</li>
            ))}
          </BodyList>
        </PickRow>
        <Grip $m="0 0 0 97px" />
      </Section>
      <Section>
        <Head>选项(O)</Head>
        <Choice>
          <input type="checkbox" checked={merge} onChange={() => setMerge(!merge)} />
          合并实体(R)
        </Choice>
        <Choice>
          <input type="checkbox" checked={knit} onChange={() => setKnit(!knit)} />
          缝合曲面(K)
        </Choice>
        <Choice>
          <input type="checkbox" checked={visual} onChange={() => setVisual(!visual)} />
          延伸视觉属性(P)
        </Choice>
        <Choice>
          <input type="radio" name="preview" checked={preview === "full"} onChange={() => setPreview("full")} />
          完整预览(F)
        </Choice>
        <Choice>
          <input type="radio" name="preview" checked={preview === "part"} onChange={() => setPreview("part")} />
          部分预览(T)
        </Choice>
      </Section>
      <PanelHandle aria-label="折叠">
        <Grip />
      </PanelHandle>
    </Panel>
  );
}

export default function App() {
  return (
    <Window>
      <GlobalStyle />
      <TitleBar>
        <MenuSide>
          <Logo>
            <svg viewBox="0 0 17 17" fill="none" stroke="#e2231a" strokeWidth="1.500">
              <path d="M4 2.500q6-2 6.500 0T5 6M1 8.500q7-2 6.500 2T1 15.500l3-5" />
              <path d="M15.500 6.500q-5 .5-5 2.500t3.500 3-4.500 3.500" />
            </svg>
            <span><b>SOLID</b>WORKS</span>
          </Logo>
          <Menu>
            {menus.map((m) => (
              <button key={m}>{m}</button>
            ))}
          </Menu>
          <Icon name="pin" size={10} />
        </MenuSide>
        <QuickTools>
          {quickTools.map(([name, wide, caret, on]) => (
            <ToolButton key={name} $wide={wide} $on={on} aria-label={name}>
              <Icon name={name} />
              {caret && <Caret dark={on} />}
            </ToolButton>
          ))}
        </QuickTools>
        <DocTitle>Part9 *</DocTitle>
        <SearchWrap>
          <Progress />
          <SearchBox>
            <Icon name="prompt" size={11} />
            <input placeholder="搜索命令" aria-label="搜索命令" />
          </SearchBox>
        </SearchWrap>
      </TitleBar>

      <Ribbon>
        <Group>
          <Big icon="sketch" label={"草图\n绘制"} wide={24} caret />
          <Big icon="dim" label={"智能\n尺寸"} wide={21} caret />
        </Group>
        <Group>
          <SketchGrid>
            {sketchTools.map((name) => (
              <ToolButton key={name} $wide={26} aria-label={name}>
                <Icon name={name} size={15} />
                {!withoutCaret.includes(name) && <Caret />}
              </ToolButton>
            ))}
          </SketchGrid>
        </Group>
        <Group>
          <Big icon="trim" label={"剪裁实\n体(T)"} wide={29} caret />
          <Big icon="cube" label={"转换实\n体引用"} wide={31} caret />
          <Big icon="offset" label={"等距\n实体"} wide={23} />
          <Big icon="surf" label={"曲面\n上偏\n移"} wide={21} />
          <SmallList>
            <SmallTool><Icon name="mirror" size={14} />镜向实体<i /></SmallTool>
            <SmallTool><Icon name="pattern" size={14} />线性草图阵列<Caret /></SmallTool>
            <SmallTool><Icon name="move" size={14} />移动实体<Caret /></SmallTool>
          </SmallList>
        </Group>
        <Group>
          <Big icon="relation" label={"显示/删除\n几何关系"} wide={42} caret />
          <Big icon="repair" label={"修复\n草图"} wide={21} />
        </Group>
        <Group>
          <Big icon="snap" label={"快速\n捕捉"} wide={21} caret on />
        </Group>
        <Group>
          <Big icon="rapid" label={"快速\n草图"} wide={20} on />
        </Group>
        <Big icon="instant" label="Instant2D" wide={41} on pressed />
        <Group $last>
          <Big icon="shaded" label={"上色\n草图\n轮廓"} wide={21} />
        </Group>
      </Ribbon>

      <Workspace>
        <Scene />
        <TopStrip>
          <TabBar>
            {tabs.map(([name, wide]) => (
              <Tab key={name} $wide={wide} $active={name === "草图"}>{name}</Tab>
            ))}
          </TabBar>
          <HeadsUp $left={22}>
            {viewTools.map(([name, wide, caret]) => (
              <ToolButton key={name} $wide={wide} $gap={3} aria-label={name}>
                <Icon name={name} size={15} />
                {caret && <Caret />}
              </ToolButton>
            ))}
          </HeadsUp>
          <HeadsUp $end>
            {["dockL", "dockR", "minimize", "restore", "close"].map((name) => (
              <ToolButton key={name} $wide={19} $center aria-label={name}>
                <Icon name={name} size={14} />
              </ToolButton>
            ))}
          </HeadsUp>
        </TopStrip>
        <Columns>
          <PropertyManager />
          <TreeRoot>
            <svg width="5" height="7" viewBox="0 0 5 7"><path d="M0 0l4 3.500L0 7z" fill="#222" /></svg>
            <Icon name="part" size={15} />
            Part9 ("Part...
          </TreeRoot>
          <Corner>
            <button aria-label="确定"><Icon name="okPale" size={21} /></button>
            <button aria-label="取消"><Icon name="cancelPale" size={19} /></button>
          </Corner>
          <TaskPane>
            {["paneHome", "library", "folder", "palette", "ball", "props", "chat"].map((name) => (
              <TaskButton key={name} $active={name === "ball"} aria-label={name}>
                <Icon name={name} size={15} />
              </TaskButton>
            ))}
          </TaskPane>
        </Columns>
      </Workspace>
    </Window>
  );
}
